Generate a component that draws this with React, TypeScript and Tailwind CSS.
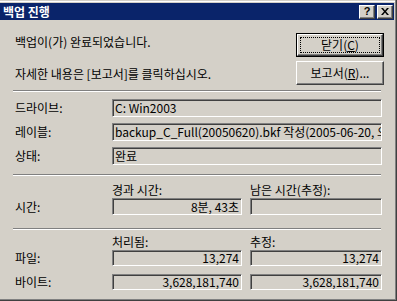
import React from 'react';

const font = { fontFamily: '"Noto Sans CJK KR", "Noto Sans", sans-serif' };

// 클래식 3D 입력칸 (읽기 전용)
function Field({ value, right, className }: { value: string; right?: boolean; className: string }) {
  return (
    <div
      className={`${className} flex items-center overflow-hidden whitespace-nowrap border border-t-[#808080] border-l-[#808080] border-b-white border-r-white bg-[#d4d0c8] shadow-[inset_1px_1px_0_#404040] text-[12px] leading-none text-black ${right ? 'justify-end pr-[2px]' : 'pl-[2px]'}`}
    >
      {value}
    </div>
  );
}

function Separator() {
  return <div className="ml-[13px] w-[368px] h-[2px] border-t border-t-[#808080] border-b border-b-white" />;
}

function CaptionButton({ children }: { children: React.ReactNode }) {
  return (
    <div className="w-[16px] h-[14px] flex items-center justify-center bg-[#d4d0c8] border border-t-white border-l-white border-b-[#404040] border-r-[#404040] shadow-[inset_-1px_-1px_0_#808080]">
      {children}
    </div>
  );
}

export default function App() {
  return (
    <div
      style={font}
      className="w-[397px] h-[301px] bg-[#d4d0c8] border-r border-b border-[#404040] shadow-[inset_0_1px_0_#d4d0c8,inset_0_2px_0_#fff] overflow-hidden"
    >
      <div className="h-full border-r border-b border-[#808080] pt-[3px]">
        {/* 제목 표시줄 */}
        <div className="w-[394px] h-[17px] bg-[#0a246a] flex items-center justify-between">
          <span className="pl-[3px] text-[12px] font-bold text-white leading-none">백업 진행</span>
          <div className="flex gap-[2px] pr-[1px]">
            <CaptionButton>
              <span className="text-[11px] font-bold leading-none text-black" style={{ fontFamily: '"Liberation Sans", sans-serif' }}>?</span>
            </CaptionButton>
            <CaptionButton>
              <svg width="8" height="7" viewBox="0 0 8 7">
                <path d="M0 0h2l2 2.5L6 0h2L5 3.5 8 7H6L4 4.5 2 7H0l3-3.5z" fill="#000" />
              </svg>
            </CaptionButton>
          </div>
        </div>

        {/* 상단 메시지 + 버튼 */}
        <div className="flex mt-[13px]">
          <div className="w-[296px] pl-[15px] text-[12px] text-black">
            <div className="leading-[16px] mt-[1px]">백업이(가) 완료되었습니다.</div>
            <div className="leading-[16px] mt-[16px]">자세한 내용은 [보고서]를 클릭하십시오.</div>
          </div>
          <div className="flex flex-col gap-[4px]">
            <div className="w-[88px] h-[24px] border border-black">
              <div className="h-full border border-t-white border-l-white border-b-[#404040] border-r-[#404040] shadow-[inset_-1px_-1px_0_#808080] p-[2px]">
                <div className="h-full border border-dotted border-black flex items-center justify-center text-[12px] leading-none text-black">
                  닫기(<span className="underline">C</span>)
                </div>
              </div>
            </div>
            <div className="w-[88px] h-[24px] border border-t-white border-l-white border-b-[#404040] border-r-[#404040] shadow-[inset_-1px_-1px_0_#808080] flex items-center justify-center text-[12px] leading-none text-black">
              보고서(<span className="underline">R</span>)...
            </div>
          </div>
        </div>

        <div className="mt-[5px]">
          <Separator />
        </div>

        {/* 드라이브 / 레이블 / 상태 */}
        <div className="flex flex-col gap-[6px] mt-[7px] text-[12px] text-black">
          {[
            ['드라이브:', 'C: Win2003'],
            ['레이블:', 'backup_C_Full(20050620).bkf 작성(2005-06-20, 오후 3:15)'],
            ['상태:', '완료'],
          ].map(([label, value]) => (
            <div key={label} className="flex items-center h-[18px]">
              <span className="w-[112px] pl-[15px] leading-none">{label}</span>
              <Field value={value} className="w-[270px] h-[18px]" />
            </div>
          ))}
        </div>

        <div className="mt-[9px]">
          <Separator />
        </div>

        {/* 시간 */}
        <div className="text-[12px] text-black">
          <div className="flex mt-[7px] h-[14px] items-center leading-none">
            <span className="ml-[112px] w-[138px]">경과 시간:</span>
            <span>남은 시간(추정):</span>
          </div>
          <div className="flex items-center mt-[1px] h-[17px]">
            <span className="w-[112px] pl-[15px] leading-none">시간:</span>
            <Field value="8분, 43초" right className="w-[130px] h-[17px]" />
            <Field value="" className="ml-[8px] w-[132px] h-[17px]" />
          </div>
        </div>

        <div className="mt-[13px]">
          <Separator />
        </div>

        {/* 파일 / 바이트 */}
        <div className="text-[12px] text-black">
          <div className="flex mt-[5px] h-[14px] items-center leading-none">
            <span className="ml-[112px] w-[138px]">처리됨:</span>
            <span>추정:</span>
          </div>
          <div className="flex flex-col gap-[8px] mt-[1px]">
            {[
              ['파일:', '13,274', '13,274'],
              ['바이트:', '3,628,181,740', '3,628,181,740'],
            ].map(([label, done, est]) => (
              <div key={label} className="flex items-center h-[16px]">
                <span className="w-[112px] pl-[15px] leading-none">{label}</span>
                <Field value={done} right className="w-[130px] h-[16px]" />
                <Field value={est} right className="ml-[8px] w-[132px] h-[16px]" />
              </div>
            ))}
          </div>
        </div>
      </div>
    </div>
  );
}
